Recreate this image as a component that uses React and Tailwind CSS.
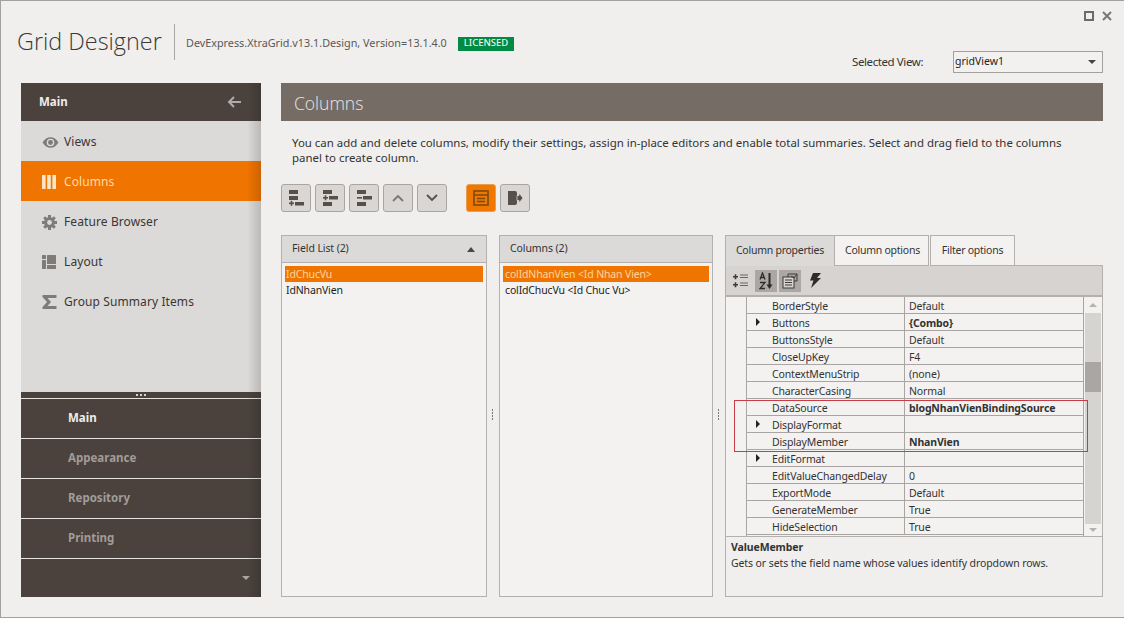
import React from "react";

const F = "[font-family:'Noto_Sans','Open_Sans',sans-serif]";

function Eye() {
  return (
    <svg width="17" height="13" viewBox="0 0 16 12" fill="none">
      <path d="M0.5 6C2.5 2.6 5 1 8 1s5.5 1.6 7.5 5c-2 3.4-4.5 5-7.5 5S2.5 9.400.5 6Z" fill="#7f7b78" />
      <circle cx="8" cy="6" r="3.6" fill="#dcdad8" />
      <circle cx="8" cy="6" r="2.3" fill="#7f7b78" />
    </svg>
  );
}
function ColumnsIcon() {
  return (
    <svg width="14" height="14" viewBox="0 0 14 14" fill="#fbe6c8">
      <rect x="0" y="0" width="3.6" height="14" />
      <rect x="5.2" y="0" width="3.6" height="14" />
      <rect x="10.400" y="0" width="3.6" height="14" />
    </svg>
  );
}
function Gear() {
  return (
    <svg width="15" height="15" viewBox="0 0 15 15">
      <g fill="#7f7b78">
        <circle cx="7.500" cy="7.500" r="5.400" />
        <rect x="6" y="0" width="3" height="15" />
        <rect x="0" y="6" width="15" height="3" />
        <rect x="6" y="0" width="3" height="15" transform="rotate(45 7.500 7.500)" />
        <rect x="6" y="0" width="3" height="15" transform="rotate(-45 7.500 7.500)" />
      </g>
      <circle cx="7.500" cy="7.500" r="2.400" fill="#dcdad8" />
    </svg>
  );
}
function LayoutIcon() {
  return (
    <svg width="14" height="14" viewBox="0 0 14 14" fill="#7f7b78">
      <rect x="0" y="0" width="4" height="4" rx="0.500" />
      <rect x="0" y="5" width="4" height="9" rx="0.500" />
      <rect x="5" y="0" width="9" height="9" rx="0.500" />
      <rect x="5" y="10" width="9" height="4" rx="0.500" />
    </svg>
  );
}
function Sigma() {
  return (
    <svg width="15" height="14" viewBox="0 0 15 14" fill="#7f7b78">
      <path d="M0.500 0H14.500V3H5.500L9 7L5.500 11H14.500V14H0.500V12L5 7L0.500 2Z" />
    </svg>
  );
}

function TreeIcon({ kind }) {
  const c = "#55504c";
  if (kind === 0)
    return (
      <svg width="20" height="18" viewBox="0 0 20 18" fill={c}>
        <rect x="3" y="1" width="9" height="4" />
        <rect x="3" y="7" width="9" height="4" />
        <rect x="3" y="13.500" width="5" height="1.600" />
        <rect x="4.700" y="11.800" width="1.600" height="5" />
        <rect x="9" y="13" width="9" height="3.500" />
      </svg>
    );
  if (kind === 1)
    return (
      <svg width="20" height="18" viewBox="0 0 20 18" fill={c}>
        <rect x="3" y="1" width="9" height="4" />
        <rect x="3" y="8" width="5" height="1.600" />
        <rect x="4.700" y="6.300" width="1.600" height="5" />
        <rect x="9" y="7" width="9" height="3.500" />
        <rect x="3" y="13" width="9" height="4" />
      </svg>
    );
  return (
    <svg width="20" height="18" viewBox="0 0 20 18" fill={c}>
      <rect x="3" y="1" width="9" height="4" />
      <rect x="3" y="8" width="5" height="1.600" />
      <rect x="9" y="7" width="9" height="3.500" />
      <rect x="3" y="13" width="9" height="4" />
    </svg>
  );
}

function ToolBtn({ children, active }) {
  return (
    <button
      className={
        "w-[30px] h-[28px] rounded-[3px] border flex items-center justify-center " +
        (active ? "bg-[#f07800] border-[#e8a050]" : "bg-[#d9d6d3] border-[#a8a5a2]")
      }
    >
      {children}
    </button>
  );
}

const navItems = [
  ["Views", <Eye />],
  ["Columns", <ColumnsIcon />],
  ["Feature Browser", <Gear />],
  ["Layout", <LayoutIcon />],
  ["Group Summary Items", <Sigma />],
];

const rows = [
  ["BorderStyle", "Default"],
  ["Buttons", "{Combo}", 1, 1],
  ["ButtonsStyle", "Default"],
  ["CloseUpKey", "F4"],
  ["ContextMenuStrip", "(none)"],
  ["CharacterCasing", "Normal"],
  ["DataSource", "blogNhanVienBindingSource", 0, 1],
  ["DisplayFormat", "", 1],
  ["DisplayMember", "NhanVien", 0, 1],
  ["EditFormat", "", 1],
  ["EditValueChangedDelay", "0"],
  ["ExportMode", "Default"],
  ["GenerateMember", "True"],
  ["HideSelection", "True"],
];

function Splitter() {
  return (
    <div className="w-[12px] flex flex-col items-center justify-center gap-[1px] pb-[4px] pr-[1px]">
      <span className="w-[1px] h-[2px] bg-[#777]" />
      <span className="w-[1px] h-[2px] bg-[#777]" />
      <span className="w-[1px] h-[2px] bg-[#777]" />
      <span className="w-[1px] h-[2px] bg-[#777]" />
    </div>
  );
}

export default function App() {
  return (
    <div className={"relative w-[1124px] h-[618px] overflow-hidden bg-[#f0efed] border border-[#a3a19f] border-r-0 flex flex-col text-[#333] " + F}>
      {/* header */}
      <div className="h-[82px] flex shrink-0 relative">
        <div className="flex items-center pl-[16px] h-[82px]">
          <span className="text-[23.400px] font-light text-[#3a3a3a] w-[145px] whitespace-nowrap [font-family:'Open_Sans',sans-serif]">Grid Designer</span>
          <span className="ml-[12px] w-[1px] h-[36px] bg-[#a9a6a3]" />
          <span className="ml-[11px] mt-[3px] w-[262px] text-[10.800px] text-[#5b5855] whitespace-nowrap">DevExpress.XtraGrid.v13.1.Design, Version=13.1.4.0</span>
          <span className="ml-[10px] mt-[3px] h-[14px] w-[56px] bg-[#008a44] text-[#e8f5ec] text-[9.500px] font-medium flex items-center justify-center">LICENSED</span>
        </div>
        <div className="ml-auto pr-[21px] flex flex-col items-end">
          <div className="flex gap-[8px] items-center pt-[8px] h-[21px] mr-[-9px]">
            <span className="w-[10px] h-[10px] border-2 border-[#6d6a68]" />
            <svg width="10" height="10" viewBox="0 0 10 10" stroke="#777" strokeWidth="2"><path d="M1 1l8 8M9 1l-8 8" /></svg>
          </div>
          <div className="flex items-center mt-[29px] h-[22px]">
            <span className="text-[11.500px] text-[#333] w-[101px] tracking-[-0.4px]">Selected View:</span>
            <div className="w-[150px] h-[22px] border border-[#a3a19f] bg-[#f2f1ef] flex items-center pl-[1px] pr-[6px] justify-between text-[10.500px] text-[#222]">
              <span>gridView1</span>
              <span className="w-0 h-0 border-x-[4px] border-x-transparent border-t-[4px] border-t-[#444]" />
            </div>
          </div>
        </div>
      </div>

      {/* body */}
      <div className="flex flex-1 pl-[20px] pr-[21px] pb-[20px] min-h-0">
        {/* sidebar */}
        <aside className="w-[240px] shrink-0 flex flex-col relative">
          <div className="h-[38px] bg-[#4b423d] flex items-center justify-between pl-[18px] pr-[20px] text-[11.500px] font-bold text-[#efedea]">
            <span>Main</span>
            <svg width="14" height="12" viewBox="0 0 14 12" fill="none" stroke="#b0aba7" strokeWidth="2"><path d="M14 6H2M7 1L2 6l5 5" /></svg>
          </div>
          <div className="flex-1 bg-[#dcdad8] flex flex-col">
            {navItems.map(([label, icon], i) => (
              <div
                key={label}
                className={
                  "h-[40px] flex items-center text-[12px] pl-[21px] pt-[2px] tracking-[0.1px] " +
                  (i === 1 ? "bg-[#f07400] text-[#fbdca8]" : "text-[#3a3633]")
                }
              >
                <span className="w-[22px] flex justify-start">{icon}</span>
                <span>{label}</span>
              </div>
            ))}
          </div>
          <div className="h-[205px] bg-[#4b423d] flex flex-col">
            <div className="h-[6px] flex items-center justify-center gap-[2px]">
              <span className="w-[2px] h-[2px] bg-[#d5d2cf]" />
              <span className="w-[2px] h-[2px] bg-[#d5d2cf]" />
              <span className="w-[2px] h-[2px] bg-[#d5d2cf]" />
            </div>
            {["Main", "Appearance", "Repository", "Printing"].map((t, i) => (
              <div
                key={t}
                className={
                  "h-[40px] border-t border-[#e6e3e0] flex items-center pl-[47px] pb-[2px] text-[11.500px] font-bold " +
                  (i === 0 ? "text-[#efedea]" : "text-[#a19c98]")
                }
              >
                {t}
              </div>
            ))}
            <div className="flex-1 border-t border-[#e6e3e0] flex items-end justify-end pr-[11px] pb-[17px]">
              <span className="w-0 h-0 border-x-[4px] border-x-transparent border-t-[4px] border-t-[#a8a4a0]" />
            </div>
          </div>
          <div className="absolute top-0 bottom-0 right-0 w-[14px] bg-gradient-to-r from-transparent to-black/15 pointer-events-none" />
        </aside>

        {/* content */}
        <main className="flex-1 ml-[20px] flex flex-col min-w-0">
          <div className="h-[38px] shrink-0 bg-[#756c66] flex items-center pl-[13px] pt-[2px] text-[17.500px] font-light text-[#e8e5e2] [font-family:'Open_Sans',sans-serif]">Columns</div>
          <p className="mt-[14px] pl-[11px] pr-[30px] text-[11.450px] leading-[15px] text-[#333] h-[30px]">
            You can add and delete columns, modify their settings, assign in-place editors and enable total summaries. Select and drag field to the columns panel to create column.
          </p>
          <div className="mt-[19px] flex h-[28px] shrink-0">
            <div className="flex gap-[4px]">
              <ToolBtn><TreeIcon kind={0} /></ToolBtn>
              <ToolBtn><TreeIcon kind={1} /></ToolBtn>
              <ToolBtn><TreeIcon kind={2} /></ToolBtn>
              <ToolBtn>
                <svg width="12" height="8" viewBox="0 0 12 8" fill="none" stroke="#7a7774" strokeWidth="1.800"><path d="M1 7l5-5 5 5" /></svg>
              </ToolBtn>
              <ToolBtn>
                <svg width="12" height="8" viewBox="0 0 12 8" fill="none" stroke="#55504c" strokeWidth="1.800"><path d="M1 1l5 5 5-5" /></svg>
              </ToolBtn>
            </div>
            <div className="flex gap-[4px] ml-[19px]">
              <ToolBtn active>
                <svg width="16" height="16" viewBox="0 0 16 16" fill="none" stroke="#7a4a12" strokeWidth="1.600">
                  <rect x="1" y="1" width="14" height="14" />
                  <path d="M1 5h14M4 8.500h8M4 11.500h8" />
                </svg>
              </ToolBtn>
              <ToolBtn>
                <svg width="16" height="14" viewBox="0 0 16 14" fill="#55504c">
                  <path d="M1 0h7a2 2 0 0 1 2 2v10a2 2 0 0 1-2 2H1Z" />
                  <path d="M10 4.500h2V2l4 5-4 5V9.500h-2Z" stroke="#d9d6d3" strokeWidth="0.800" />
                </svg>
              </ToolBtn>
            </div>
          </div>

          <div className="mt-[23px] flex flex-1 min-h-0">
            {/* field list */}
            <section className="w-[206px] border border-[#b3b0ad] flex flex-col bg-[#f3f2f1]">
              <div className="h-[27px] bg-[#dcdad8] border-b border-[#b3b0ad] flex items-center justify-between pl-[10px] pr-[11px] text-[10.500px] tracking-[-0.1px] text-[#333]">
                <span>Field List (2)</span>
                <span className="w-0 h-0 border-x-[4px] border-x-transparent border-b-[5px] border-b-[#4b4744]" />
              </div>
              <div className="px-[3px] pt-[3px] text-[10.500px] tracking-[-0.15px] leading-[16px] text-[#222]">
                <div className="h-[16px] bg-[#f07400] text-[#fbd79e] pl-[1px]">IdChucVu</div>
                <div className="pl-[1px]">IdNhanVien</div>
              </div>
            </section>
            <Splitter />
            {/* columns */}
            <section className="w-[214px] border border-[#b3b0ad] flex flex-col bg-[#f3f2f1]">
              <div className="h-[27px] bg-[#dcdad8] border-b border-[#b3b0ad] flex items-center pl-[10px] text-[10.500px] tracking-[-0.1px] text-[#333]">Columns (2)</div>
              <div className="px-[3px] pt-[3px] text-[10.500px] tracking-[-0.15px] leading-[16px] text-[#222]">
                <div className="h-[16px] bg-[#f07400] text-[#fbd79e] pl-[2px]">colIdNhanVien &lt;Id Nhan Vien&gt;</div>
                <div className="pl-[2px]">colIdChucVu &lt;Id Chuc Vu&gt;</div>
              </div>
            </section>
            <Splitter />
            {/* properties */}
            <section className="flex-1 flex flex-col min-w-0">
              <div className="flex h-[31px] shrink-0 text-[10.500px] tracking-[-0.25px] text-[#333]">
                <div className="w-[110px] bg-[#dcdad8] border border-[#b3b0ad] border-b-0 flex items-center justify-center">Column properties</div>
                <div className="w-[94px] bg-[#f3f2f1] border-t border-r border-b border-[#b3b0ad] flex items-center justify-center pl-[2px]">Column options</div>
                <div className="w-[85px] bg-[#f3f2f1] border-t border-r border-b border-[#b3b0ad] flex items-center justify-center ml-[1px] border-l">Filter options</div>
                <div className="flex-1 border-b border-[#b3b0ad]" />
              </div>
              <div className="flex-1 border border-t-0 border-[#b3b0ad] flex flex-col min-h-0 bg-[#f3f2f1]">
                <div className="h-[31px] shrink-0 bg-[#d6d3d0] flex items-center pl-[7px] gap-[6px] border-b-2 border-[#b3b0ad]">
                  <span className="w-[16px] h-[22px] flex items-center justify-center">
                    <svg width="16" height="16" viewBox="0 0 16 16" fill="#3f3b38">
                      <path d="M0 3h5v1.600H0zM1.700 1.300h1.600v5H1.700zM0 11h5v1.600H0zM1.700 9.300h1.600v5H1.700z" />
                      <path d="M7 1.500h8v1H7zM7 4h8v1H7zM7 9.500h8v1H7zM7 12h8v1H7z" fill="#6a6662" />
                    </svg>
                  </span>
                  <span className="w-[22px] h-[22px] bg-[#aaa7a4] flex items-center justify-center">
                    <svg width="16" height="18" viewBox="0 0 16 18" fill="none">
                      <path d="M2 7.500L4.500 1 7 7.500M3 5.500h3M2 10.500h5L2 16.500h5" stroke="#2e2b29" strokeWidth="1.300" />
                      <path d="M11.500 1v13" stroke="#2e2b29" strokeWidth="2" />
                      <path d="M8.500 12.500h6l-3 4.500Z" fill="#2e2b29" />
                    </svg>
                  </span>
                  <span className="w-[22px] h-[22px] bg-[#aaa7a4] flex items-center justify-center ml-[-4px]">
                    <svg width="18" height="17" viewBox="0 0 18 17" fill="none" stroke="#3f3b38" strokeWidth="1">
                      <rect x="2" y="5" width="11" height="11" fill="#d6d3d0" />
                      <path d="M4 8h7M4 10.500h7M4 13h7" />
                      <path d="M7 5V2h9v7h-3" />
                      <path d="M10 4l3 2 3-4" />
                    </svg>
                  </span>
                  <svg width="14" height="17" viewBox="0 0 14 17" fill="#2e2b29" className="ml-[1px]">
                    <path d="M5 1h8L9 6h4L3 16l2.500-7.500H2Z" />
                  </svg>
                </div>
                <div className="h-[240px] shrink-0 flex border-b border-[#b3b0ad] overflow-hidden relative">
                  <div className="w-[20px] shrink-0" />
                  <div className="w-[338px] border-x border-[#a8a5a2] flex flex-col">
                    {rows.map(([k, v, arrow, bold]) => (
                      <div key={k} className="h-[17px] shrink-0 flex border-b border-[#a8a5a2] text-[10.500px] tracking-[-0.15px] leading-[17px] text-[#333]">
                        <div className="w-[158px] border-r border-[#a8a5a2] flex items-start">
                          <span className="w-[25px] h-[16px] flex justify-center items-center pr-[3px]">
                            {arrow ? <span className="w-0 h-0 border-y-[4px] border-y-transparent border-l-[4px] border-l-[#222]" /> : null}
                          </span>
                          <span className="whitespace-nowrap pt-[1px]">{k}</span>
                        </div>
                        <div className={"pl-[4px] pt-[1px] whitespace-nowrap " + (bold ? "font-bold" : "")}>{v}</div>
                      </div>
                    ))}
                  </div>
                  <div className="w-[16px] ml-[1px] mr-auto flex flex-col items-center pt-[6px] pb-[4px]">
                    <span className="w-0 h-0 border-x-[4px] border-x-transparent border-b-[4px] border-b-[#b5b2af]" />
                    <div className="mt-[6px] w-full flex-1 bg-[#d6d4d1] flex flex-col pt-[49px]">
                      <div className="h-[30px] bg-[#a9a6a3]" />
                    </div>
                    <span className="mt-[4px] w-0 h-0 border-x-[4px] border-x-transparent border-t-[4px] border-t-[#b5b2af]" />
                  </div>
                </div>
                <div className="flex-1 px-[5px] pt-[2px] text-[10.500px] tracking-[-0.1px] leading-[16px] text-[#333] bg-[#f0efed]">
                  <div className="font-bold">ValueMember</div>
                  <div>Gets or sets the field name whose values identify dropdown rows.</div>
                </div>
              </div>
            </section>
          </div>
        </main>
      </div>

      {/* annotation */}
      <div className="absolute left-[733px] top-[399px] w-[354px] h-[52px] border border-[#cc3a44] pointer-events-none" />
    </div>
  );
}
